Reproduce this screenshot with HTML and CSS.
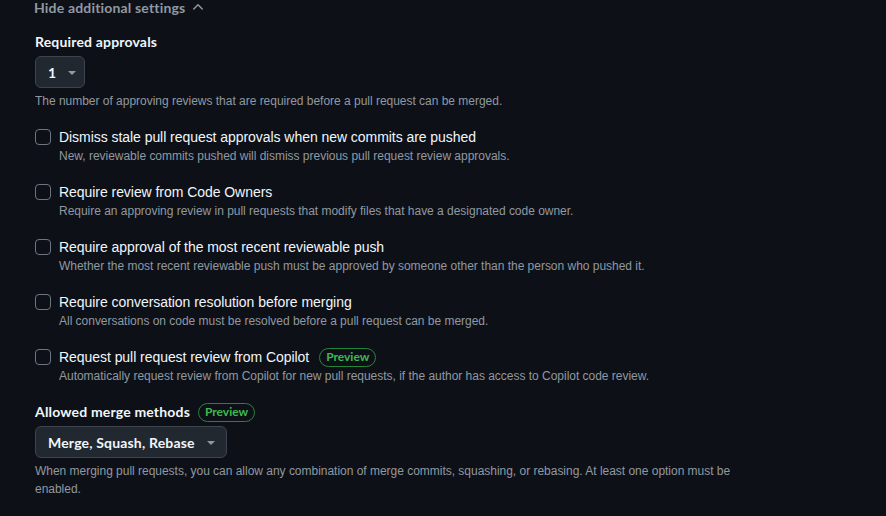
FILE: index.html
```html
<!DOCTYPE html>
<html lang="en">
<head>
<meta charset="utf-8">
<title>Branch protection settings</title>
<link rel="stylesheet" href="styles.css">
</head>
<body>
<main class="settings">
  <button class="toggle" type="button">Hide additional settings
    <svg class="chev" width="16" height="16" viewBox="0 0 16 16" aria-hidden="true"><path d="M3.22 10.53a.749.749 0 0 1 0-1.06l4.25-4.250a.749.749 0 0 1 1.06 0l4.25 4.25a.749.749 0 1 1-1.06 1.06L8 6.811 4.28 10.530a.749.749 0 0 1-1.06 0Z"/></svg>
  </button>

  <section class="group">
    <div class="label">Required approvals</div>
    <button class="select select-small" type="button"><span>1</span><span class="caret"></span></button>
    <p class="note">The number of approving reviews that are required before a pull request can be merged.</p>
  </section>

  <ul class="checks">
    <li class="check">
      <span class="box"></span>
      <div class="check-text">
        <div class="check-title">Dismiss stale pull request approvals when new commits are pushed</div>
        <div class="note">New, reviewable commits pushed will dismiss previous pull request review approvals.</div>
      </div>
    </li>
    <li class="check">
      <span class="box"></span>
      <div class="check-text">
        <div class="check-title">Require review from Code Owners</div>
        <div class="note">Require an approving review in pull requests that modify files that have a designated code owner.</div>
      </div>
    </li>
    <li class="check">
      <span class="box"></span>
      <div class="check-text">
        <div class="check-title">Require approval of the most recent reviewable push</div>
        <div class="note">Whether the most recent reviewable push must be approved by someone other than the person who pushed it.</div>
      </div>
    </li>
    <li class="check">
      <span class="box"></span>
      <div class="check-text">
        <div class="check-title">Require conversation resolution before merging</div>
        <div class="note">All conversations on code must be resolved before a pull request can be merged.</div>
      </div>
    </li>
    <li class="check">
      <span class="box"></span>
      <div class="check-text">
        <div class="check-title">Request pull request review from Copilot <span class="badge">Preview</span></div>
        <div class="note">Automatically request review from Copilot for new pull requests, if the author has access to Copilot code review.</div>
      </div>
    </li>
  </ul>

  <section class="group">
    <div class="label">Allowed merge methods <span class="badge">Preview</span></div>
    <button class="select select-wide" type="button"><span>Merge, Squash, Rebase</span><span class="caret"></span></button>
    <p class="note wrap">When merging pull requests, you can allow any combination of merge commits, squashing, or rebasing. At least one option must be enabled.</p>
  </section>
</main>
</body>
</html>
```

FILE: styles.css
```css
* { box-sizing: border-box; }
html, body { margin: 0; background: #0d1117; }
body {
  font-family: "Liberation Sans", Arial, sans-serif;
  color: #f0f6fc;
  font-size: 14px;
  line-height: 20px;
  letter-spacing: -0.05px;
  overflow: hidden;
  height: 516px;
}
.settings {
  padding-left: 35px;
  margin-top: -3px;
  display: flex;
  flex-direction: column;
}
.toggle {
  display: flex;
  align-items: center;
  gap: 5px;
  background: none;
  border: 0;
  padding: 0;
  margin-left: -1px;
  font-family: Lato, "Liberation Sans", sans-serif;
  font-size: 14px;
  font-weight: 700;
  letter-spacing: 0.17px;
  color: #9198a1;
  height: 20px;
  width: max-content;
}
.chev { fill: #9198a1; }
.group { display: flex; flex-direction: column; align-items: flex-start; }
.group:first-of-type { margin-top: 15px; }
.label {
  font-family: Lato, "Liberation Sans", sans-serif;
  font-weight: 700;
  letter-spacing: 0.17px;
  display: flex;
  align-items: center;
  gap: 8px;
}
.select {
  margin-top: 4px;
  height: 32px;
  display: flex;
  align-items: center;
  gap: 12px;
  background: #212830;
  border: 1px solid #3d444d;
  border-radius: 6px;
  color: #f0f6fc;
  font-family: Lato, "Liberation Sans", sans-serif;
  font-size: 14px;
  font-weight: 700;
  letter-spacing: 0.17px;
  padding: 0 12px 0 12px;
}
.select-small { width: 50px; }
.select-wide { padding-right: 11px; }
.caret {
  width: 0; height: 0;
  border-left: 4px solid transparent;
  border-right: 4px solid transparent;
  border-top: 4px solid #9198a1;
  margin-top: 1px;
}
.note {
  margin: 4px 0 0;
  font-size: 12px;
  line-height: 18px;
  letter-spacing: -0.02px;
  color: #9198a1;
}
.wrap { max-width: 705px; }
.checks {
  list-style: none;
  margin: 17px 0 0;
  padding: 0;
  display: flex;
  flex-direction: column;
  gap: 17px;
}
.check { display: flex; gap: 8px; }
.box {
  flex: none;
  width: 16px; height: 16px;
  margin-top: 2px;
  border: 1px solid #6e7681;
  border-radius: 4px;
}
.check-text .note { margin-top: 0; }
.check-title { display: flex; align-items: center; gap: 10px; }
.checks + .group { margin-top: 17px; }
.badge {
  display: inline-flex;
  align-items: center;
  height: 19px;
  padding: 0 6px;
  border: 1px solid #238636;
  border-radius: 10px;
  color: #3fb950;
  font-family: Lato, "Liberation Sans", sans-serif;
  font-size: 12px;
  font-weight: 700;
  letter-spacing: 0;
  line-height: 18px;
}
```
